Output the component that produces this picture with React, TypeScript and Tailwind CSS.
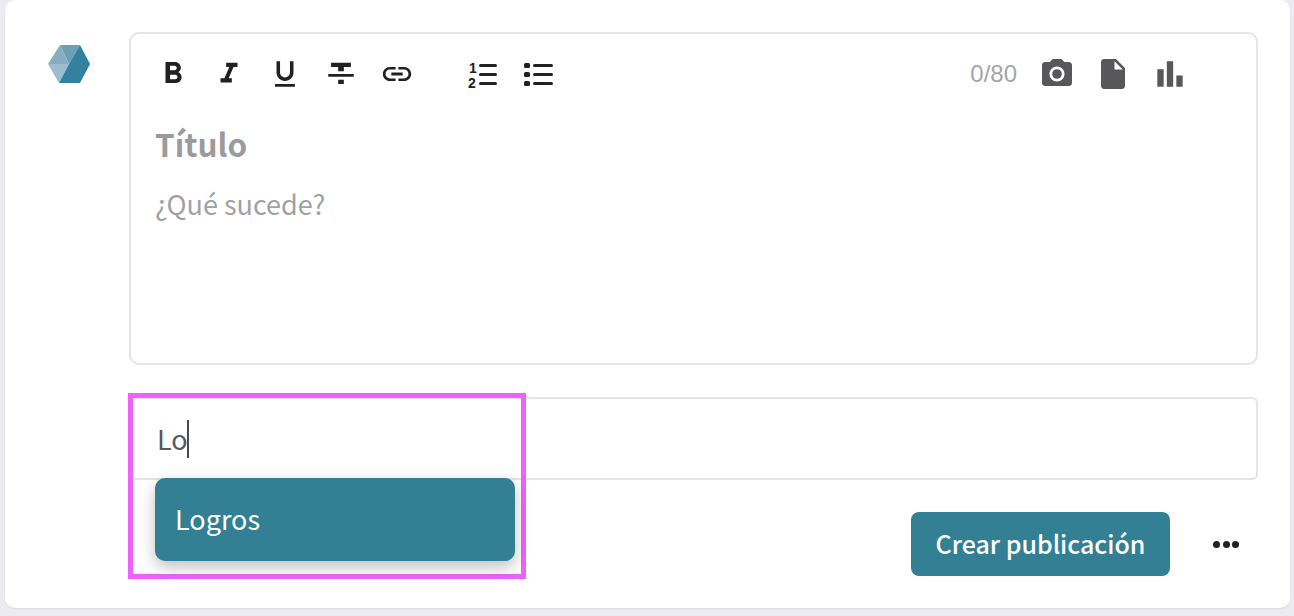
import {
  MdFormatBold,
  MdFormatItalic,
  MdFormatUnderlined,
  MdFormatStrikethrough,
  MdLink,
  MdPhotoCamera,
  MdInsertDriveFile,
  MdBarChart,
} from "react-icons/md";

function Logo() {
  return (
    <svg width="44" height="40" viewBox="0 0 44 40" className="shrink-0">
      <polygon points="13,1 33,1 22,20" fill="#6b9fb5" />
      <polygon points="13,1 1,20 22,20" fill="#88adc0" />
      <polygon points="1,20 22,20 12,39 12,39" fill="#9dbccd" />
      <polygon points="33,1 43,20 33,39 12,39 22,20" fill="#31819f" />
    </svg>
  );
}

function NumberedList() {
  return (
    <svg width="30" height="28" viewBox="0 0 30 28" fill="#212121" className="overflow-visible">
      <text x="1" y="13" fontSize="14" fontWeight="700" fontFamily="'Liberation Sans', sans-serif">
        1
      </text>
      <text x="0" y="28" fontSize="14" fontWeight="700" fontFamily="'Liberation Sans', sans-serif">
        2
      </text>
      <rect x="11" y="4" width="18" height="3" rx="1.5" />
      <rect x="11" y="13" width="18" height="3" rx="1.5" />
      <rect x="11" y="22" width="18" height="3" rx="1.5" />
    </svg>
  );
}

function BulletList() {
  return (
    <svg width="30" height="28" viewBox="0 0 30 28" fill="#212121">
      <rect x="0" y="3" width="6" height="5" rx="1.5" />
      <rect x="0" y="12" width="6" height="5" rx="1.5" />
      <rect x="0" y="21" width="6" height="5" rx="1.5" />
      <rect x="9" y="4" width="20" height="3" rx="1.5" />
      <rect x="9" y="13" width="20" height="3" rx="1.5" />
      <rect x="9" y="22" width="20" height="3" rx="1.5" />
    </svg>
  );
}

function ToolButton({ children, className = "" }: { children: React.ReactNode; className?: string }) {
  return <div className={`flex h-10 w-14 items-center justify-center text-[#212121] ${className}`}>{children}</div>;
}

export default function App() {
  return (
    <div
      className="h-[616px] w-[1294px] overflow-hidden bg-[#ecebf2] pl-[5px] pr-1"
      style={{ fontFamily: "'Noto Sans CJK SC', 'Noto Sans', sans-serif" }}
    >
      <div className="flex h-[608px] rounded-b-[10px] rounded-t-[10px] bg-white pl-[42px] pr-8 pt-8 shadow-[0_1px_2px_rgba(0,0,0,0.08)]">
        <div className="w-[82px] shrink-0 pt-3">
          <Logo />
        </div>
        <div className="relative flex flex-1 flex-col">
          <div className="h-[333px] rounded-[10px] border-2 border-[#e5e5e8] px-[14px]">
            <div className="mt-[20px] flex h-10 items-center">
              <ToolButton><MdFormatBold size={36} /></ToolButton>
              <ToolButton><MdFormatItalic size={34} /></ToolButton>
              <ToolButton><MdFormatUnderlined size={34} /></ToolButton>
              <ToolButton><MdFormatStrikethrough size={34} /></ToolButton>
              <ToolButton><MdLink size={34} /></ToolButton>
              <ToolButton className="ml-[30px]"><NumberedList /></ToolButton>
              <ToolButton><BulletList /></ToolButton>
              <div className="ml-auto mr-[53px] flex items-center text-[#58585a]">
                <span className="mr-[22px] font-['Liberation_Sans'] text-[24px] leading-none text-[#a5a5a8]">0/80</span>
                <MdPhotoCamera size={36} />
                <MdInsertDriveFile size={36} className="ml-[20px]" />
                <MdBarChart size={38} className="ml-[20px]" />
              </div>
            </div>
            <h2 className="mt-[24px] pl-[10px] text-[31.5px] font-bold leading-[50px] text-[#9b9b9f]">Título</h2>
            <p className="mt-[18px] pl-[10px] text-[27px] leading-[36px] text-[#a1a1a5]">¿Qué sucede?</p>
          </div>

          <div className="mt-[32px] flex h-[83px] items-center rounded-[6px] border-2 border-[#e5e5e8] pl-[26px] text-[27px] leading-none text-[#58585a]">
            <span>Lo</span>
            <span className="-ml-px h-[38px] w-[2px] bg-[#4a4a4c]" />
          </div>

          <div className="mt-[32px] flex items-center justify-end pr-[19px]">
            <button className="h-[64px] w-[259px] rounded-[8px] bg-[#337f93] text-[25px] font-medium text-white">
              Crear publicación
            </button>
            <div className="ml-[43px] flex gap-[2.5px]">
              <span className="h-[7px] w-[7px] rounded-full bg-[#212121]" />
              <span className="h-[7px] w-[7px] rounded-full bg-[#212121]" />
              <span className="h-[7px] w-[7px] rounded-full bg-[#212121]" />
            </div>
          </div>

          <div className="absolute -left-px top-[361px] h-[186px] w-[398px] border-[5px] border-[#ef62fa]" />
          <div className="absolute left-[26px] top-[446px] flex h-[83px] w-[360px] items-center rounded-[10px] bg-[#337f93] pl-[20px] text-[27px] text-white shadow-[0_6px_16px_rgba(0,0,0,0.25)]">
            Logros
          </div>
        </div>
      </div>
    </div>
  );
}
